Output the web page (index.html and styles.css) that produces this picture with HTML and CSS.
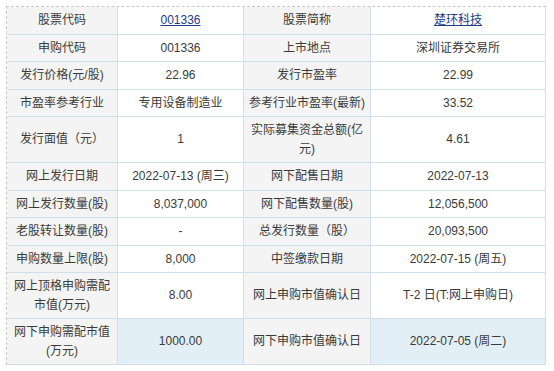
FILE: index.html
```html
<!DOCTYPE html>
<html lang="zh-CN">
<head>
    <meta charset="utf-8">
    <title>新股申购信息</title>
    <link rel="stylesheet" href="styles.css">
</head>
<body>
    <div class="ipo-box">
        <table class="ipo-table">
            <colgroup>
                <col class="c1"><col class="c2"><col class="c3"><col class="c4">
            </colgroup>
            <tr>
                <td class="label">股票代码</td>
                <td><a href="#">001336</a></td>
                <td class="label">股票简称</td>
                <td><a href="#">楚环科技</a></td>
            </tr>
            <tr>
                <td class="label">申购代码</td>
                <td>001336</td>
                <td class="label">上市地点</td>
                <td>深圳证券交易所</td>
            </tr>
            <tr>
                <td class="label">发行价格(元/股)</td>
                <td>22.96</td>
                <td class="label">发行市盈率</td>
                <td>22.99</td>
            </tr>
            <tr>
                <td class="label">市盈率参考行业</td>
                <td>专用设备制造业</td>
                <td class="label">参考行业市盈率(最新)</td>
                <td>33.52</td>
            </tr>
            <tr>
                <td class="label">发行面值（元）</td>
                <td>1</td>
                <td class="label">实际募集资金总额(亿元)</td>
                <td>4.61</td>
            </tr>
            <tr>
                <td class="label">网上发行日期</td>
                <td>2022-07-13 (周三)</td>
                <td class="label">网下配售日期</td>
                <td>2022-07-13</td>
            </tr>
            <tr>
                <td class="label">网上发行数量(股)</td>
                <td>8,037,000</td>
                <td class="label">网下配售数量(股)</td>
                <td>12,056,500</td>
            </tr>
            <tr>
                <td class="label">老股转让数量(股)</td>
                <td>-</td>
                <td class="label">总发行数量（股）</td>
                <td>20,093,500</td>
            </tr>
            <tr>
                <td class="label">申购数量上限(股)</td>
                <td>8,000</td>
                <td class="label">中签缴款日期</td>
                <td>2022-07-15 (周五)</td>
            </tr>
            <tr>
                <td class="label">网上顶格申购需配市值(万元)</td>
                <td>8.00</td>
                <td class="label">网上申购市值确认日</td>
                <td>T-2 日(T:网上申购日)</td>
            </tr>
            <tr class="hl">
                <td class="label">网下申购需配市值(万元)</td>
                <td>1000.00</td>
                <td class="label">网下申购市值确认日</td>
                <td>2022-07-05 (周二)</td>
            </tr>
        </table>
    </div>
</body>
</html>
```

FILE: styles.css
```css
* { box-sizing: border-box; }
body {
    margin: 0;
    background: #fff;
    font-family: "Liberation Sans", Arial, "Noto Sans CJK SC", sans-serif;
    font-size: 12px;
    color: #3a3a3a;
}
.ipo-box {
    margin: 6px;
    width: 540px;
    border-top: 1px dashed #c8c8c8;
    border-left: 1px dashed #c8c8c8;
}
.ipo-table {
    width: 539px;
    table-layout: fixed;
    border-collapse: separate;
    border-spacing: 0;
}
.c1 { width: 111px; }
.c2 { width: 126px; }
.c3 { width: 127px; }
.c4 { width: 175px; }
.ipo-table td {
    padding: 4px 3px;
    line-height: 18.5px;
    text-align: center;
    border-right: 1px solid #cfe0ec;
    border-bottom: 1px solid #cfe0ec;
    background: #fff;
}
.ipo-table td.label {
    background: #f4f4f4;
}
.ipo-table .hl td {
    background: #e2eff6;
}
.ipo-table .hl td.label {
    background: #f4f4f4;
}
.ipo-table a {
    color: #223c8c;
    text-decoration: underline;
}
```
